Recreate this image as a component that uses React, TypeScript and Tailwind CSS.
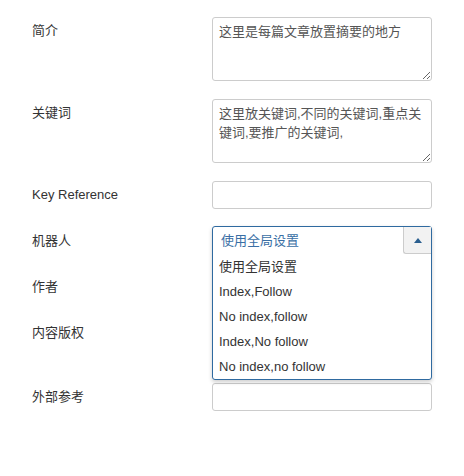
import { useState } from "react";

const options = [
  "使用全局设置",
  "Index,Follow",
  "No index,follow",
  "Index,No follow",
  "No index,no follow",
];

const font = "font-['Liberation_Sans','Noto_Sans_CJK_SC',sans-serif]";

function Label({ text }: { text: string }) {
  return (
    <div className="w-[212px] shrink-0 pl-[32px] text-[13px] leading-[28px] text-[#333]">
      {text}
    </div>
  );
}

function Input() {
  return (
    <input
      type="text"
      className="w-[220px] h-[28px] border border-[#ccc] rounded-[3px] bg-white px-[6px] text-[13px] outline-none"
    />
  );
}

export default function App() {
  const [selected] = useState(options[0]);

  return (
    <div className={`${font} relative w-[464px] h-[476px] bg-white`}>
      <div className="flex flex-col gap-[18px] pt-[17px]">
        <div className="flex">
          <Label text="简介" />
          <textarea
            defaultValue="这里是每篇文章放置摘要的地方"
            className="w-[220px] h-[64px] border border-[#ccc] rounded-[3px] px-[6px] py-[4px] text-[13px] leading-[19px] text-[#555] outline-none"
          />
        </div>
        <div className="flex">
          <Label text="关键词" />
          <textarea
            defaultValue="这里放关键词,不同的关键词,重点关键词,要推广的关键词,"
            className="w-[220px] h-[64px] border border-[#ccc] rounded-[3px] px-[6px] py-[4px] text-[13px] leading-[19px] text-[#555] outline-none"
          />
        </div>
        <div className="flex">
          <Label text="Key Reference" />
          <Input />
        </div>
        <div className="flex">
          <Label text="机器人" />
          <div className="w-[220px] h-[28px]" />
        </div>
        <div className="flex">
          <Label text="作者" />
          <Input />
        </div>
        <div className="flex">
          <Label text="内容版权" />
          <div className="w-[220px] h-[46px]" />
        </div>
        <div className="flex">
          <Label text="外部参考" />
          <Input />
        </div>
      </div>

      {/* open robots dropdown */}
      <div className="absolute left-[212px] top-[226px] w-[220px] border border-[#2f6aa0] rounded-[3px] bg-white shadow-[0_2px_4px_rgba(0,0,0,0.2)]">
        <div className="flex h-[27px] items-center justify-between">
          <span className="pl-[8px] text-[13px] text-[#3a6fa5]">{selected}</span>
          <div className="flex h-[27px] w-[28px] items-center justify-center self-start border-l border-b border-[#ccc] rounded-bl-[3px] bg-[#f2f2f2]">
            <svg width="8" height="5" viewBox="0 0 8 5">
              <path d="M0 5 L4 0 L8 5 Z" fill="#2a5f8f" />
            </svg>
          </div>
        </div>
        <ul>
          {options.map((o) => (
            <li
              key={o}
              className="h-[25px] pl-[6px] text-[13px] leading-[25px] text-[#333]"
            >
              {o}
            </li>
          ))}
        </ul>
      </div>
    </div>
  );
}
